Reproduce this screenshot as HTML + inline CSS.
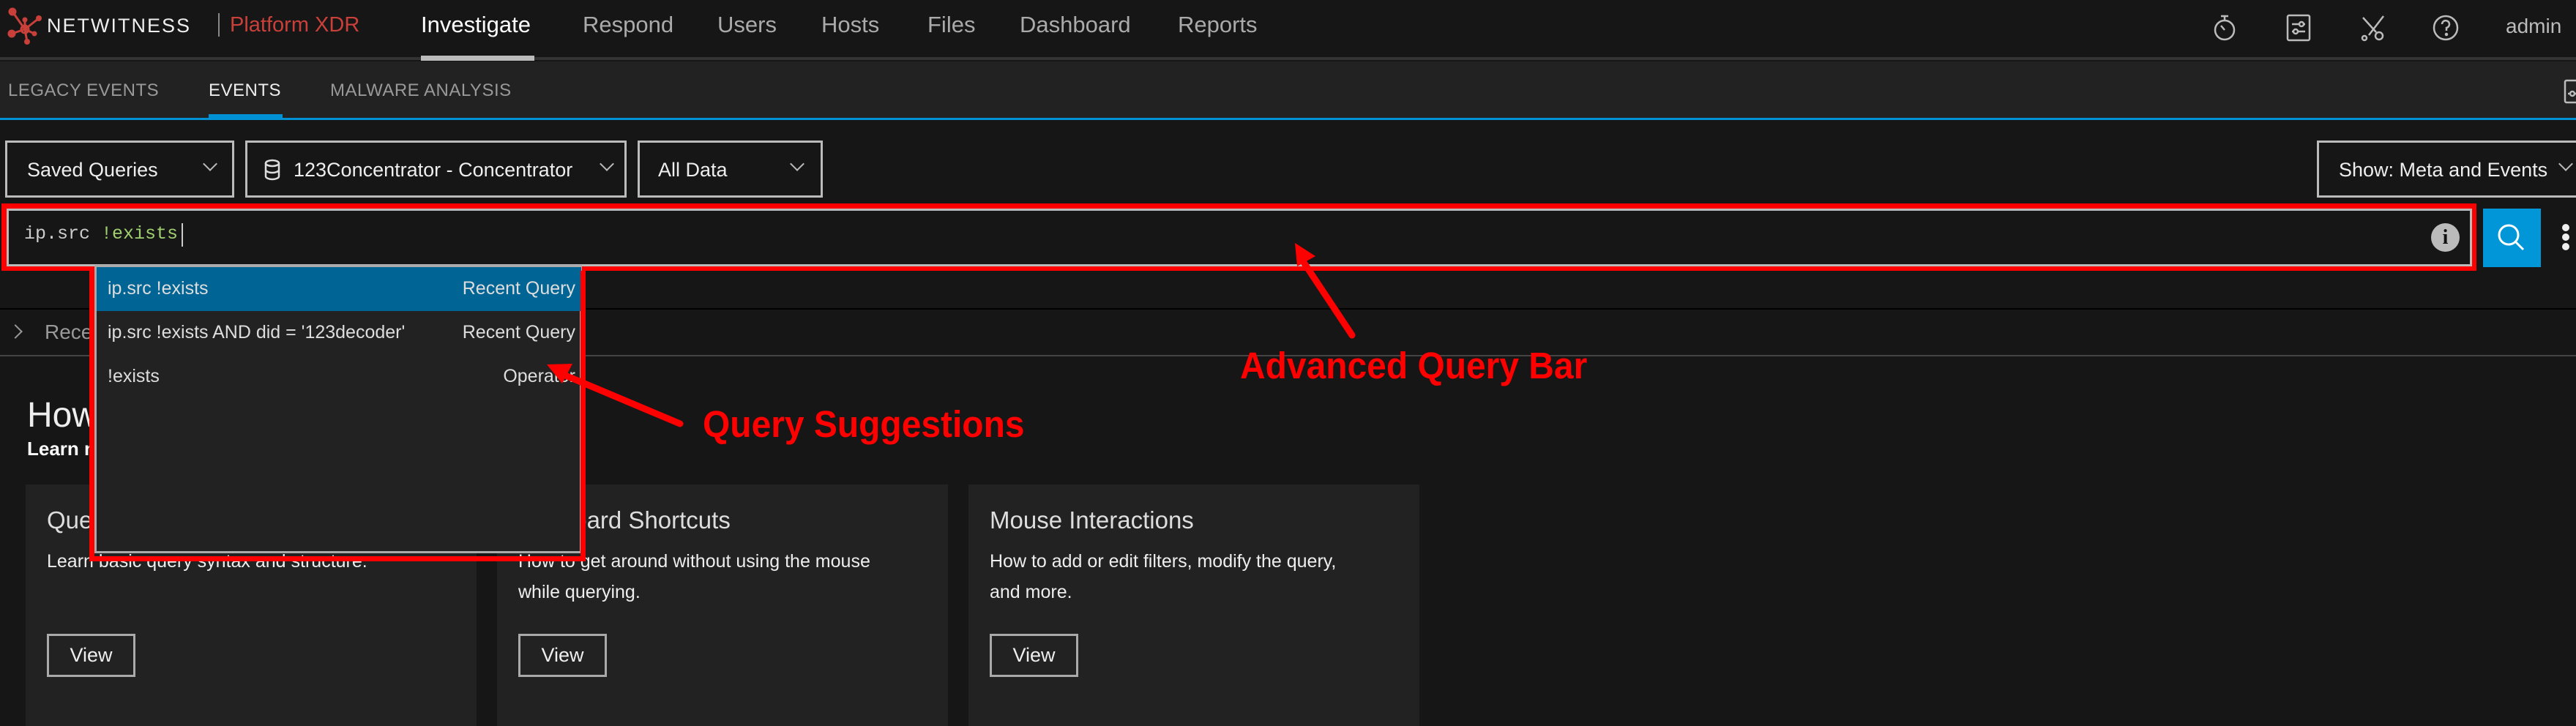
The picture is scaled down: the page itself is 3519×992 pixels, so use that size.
<!DOCTYPE html>
<html><head><meta charset="utf-8"><style>
*{box-sizing:border-box;margin:0;padding:0}
body{width:3519px;height:984px;background:#161616;font-family:"Liberation Sans",sans-serif;color:#ddd;position:relative;overflow:hidden}
.a{position:absolute;white-space:nowrap}
.nav{font-size:31px;color:#aaa;top:16px}
.sub{font-size:24px;color:#999;top:110px;letter-spacing:0.5px}
.dd{position:absolute;top:192px;height:78px;border:3px solid #bbb;font-size:27px;color:#eee}
.dd span{position:absolute;top:22px}
.chev{position:absolute;width:14px;height:14px;border-right:2px solid #bbb;border-bottom:2px solid #bbb;transform:rotate(45deg);top:22px}
.row{position:absolute;left:0;width:662px;height:60px;font-size:25px;color:#ddd}
.row .l{position:absolute;left:15px;top:15px}
.row .r{position:absolute;right:8px;top:15px}
.card{position:absolute;top:662px;width:616px;height:330px;background:#222}
.card h3{position:absolute;left:29px;top:30px;font-size:33px;font-weight:normal;color:#ddd}
.card p{position:absolute;left:29px;top:84px;font-size:25px;line-height:42px;color:#eee;white-space:normal;width:520px}
.card .v{position:absolute;left:29px;top:204px;width:121px;height:59px;border:3px solid #aaa;font-size:27px;color:#eee;text-align:center;line-height:53px}
.ann{position:absolute;color:#f00;font-weight:bold;font-size:51px;font-family:"Liberation Sans",sans-serif;transform:scaleX(0.94);transform-origin:left}
</style></head><body>
<div class="a" style="left:0;top:0;width:3519px;height:82px;background:#161616;border-bottom:4px solid #333"></div>
<svg class="a" style="left:0;top:0" width="60" height="70">
<g stroke="#c9403a" stroke-width="3"><line x1="34" y1="40" x2="17" y2="16"/><line x1="34" y1="40" x2="53" y2="25"/><line x1="34" y1="40" x2="34" y2="27"/><line x1="34" y1="40" x2="16" y2="46"/><line x1="34" y1="40" x2="47" y2="46"/><line x1="34" y1="40" x2="37" y2="57"/><circle cx="34" cy="40" r="5" fill="none"/></g>
<g fill="#c9403a"><circle cx="17" cy="16" r="5.5"/><circle cx="53" cy="25" r="4"/><circle cx="34" cy="27" r="3.5"/><circle cx="16" cy="46" r="5.5"/><circle cx="47" cy="46" r="3.5"/><circle cx="37" cy="57" r="4"/></g></svg>
<div class="a" style="left:64px;top:20px;font-size:27px;color:#eee;letter-spacing:2px">NETWITNESS</div>
<div class="a" style="left:298px;top:18px;width:2px;height:32px;background:#888"></div>
<div class="a" style="left:314px;top:18px;font-size:29px;color:#c9403a">Platform XDR</div>
<div class="a nav" style="left:575px;color:#fff;font-size:31px">Investigate</div>
<div class="a" style="left:575px;top:76px;width:155px;height:7px;background:#bbb"></div>
<div class="a nav" style="left:796px">Respond</div>
<div class="a nav" style="left:980px">Users</div>
<div class="a nav" style="left:1122px">Hosts</div>
<div class="a nav" style="left:1267px">Files</div>
<div class="a nav" style="left:1393px">Dashboard</div>
<div class="a nav" style="left:1609px">Reports</div>
<svg class="a" style="left:3022px;top:18px" width="36" height="40" fill="none" stroke="#bbb" stroke-width="2.5"><circle cx="17" cy="23" r="13"/><line x1="12" y1="4" x2="22" y2="4"/><line x1="17" y1="4" x2="17" y2="10"/><line x1="17" y1="23" x2="12" y2="17"/></svg>
<svg class="a" style="left:3122px;top:18px" width="36" height="40" fill="none" stroke="#bbb" stroke-width="2.5"><rect x="3" y="3" width="30" height="34" rx="2"/><line x1="9" y1="15" x2="27" y2="15"/><line x1="9" y1="25" x2="27" y2="25"/><circle cx="22" cy="15" r="3" fill="#161616"/><circle cx="14" cy="25" r="3" fill="#161616"/></svg>
<svg class="a" style="left:3222px;top:18px" width="40" height="40" fill="none" stroke="#bbb" stroke-width="2.5"><line x1="34" y1="4" x2="14" y2="30"/><circle cx="28" cy="31" r="5"/><line x1="6" y1="6" x2="24" y2="26"/><circle cx="8" cy="34" r="3"/></svg>
<svg class="a" style="left:3322px;top:18px" width="38" height="40" fill="none" stroke="#bbb" stroke-width="2.5"><circle cx="19" cy="20" r="16"/><path d="M14 15a5 5 0 1 1 6 5v4"/><circle cx="20" cy="29" r="1" fill="#bbb"/></svg>
<div class="a" style="left:3423px;top:20px;font-size:28px;color:#bbb">admin</div>
<div class="a" style="left:0;top:84px;width:3519px;height:80px;background:#222;border-bottom:3px solid #0090d4"></div>
<div class="a sub" style="left:11px">LEGACY EVENTS</div>
<div class="a sub" style="left:285px;color:#eee">EVENTS</div>
<div class="a" style="left:285px;top:156px;width:101px;height:8px;background:#0090d4"></div>
<div class="a sub" style="left:451px">MALWARE ANALYSIS</div>
<svg class="a" style="left:3502px;top:108px" width="20" height="34" fill="none" stroke="#bbb" stroke-width="2.5"><rect x="2" y="2" width="30" height="30" rx="2"/><line x1="6" y1="20" x2="20" y2="20"/><circle cx="12" cy="20" r="3" fill="#222"/></svg>
<div class="dd" style="left:7px;width:313px"><span style="left:27px">Saved Queries</span><i class="chev" style="left:270px"></i></div>
<div class="dd" style="left:335px;width:521px"><svg style="position:absolute;left:23px;top:22px" width="22" height="30" fill="none" stroke="#ddd" stroke-width="2.5"><ellipse cx="11" cy="6" rx="9" ry="4"/><path d="M2 6v18c0 2 4 4 9 4s9-2 9-4V6M2 15c0 2 4 4 9 4s9-2 9-4"/></svg><span style="left:63px">123Concentrator - Concentrator</span><i class="chev" style="left:484px"></i></div>
<div class="dd" style="left:871px;width:253px"><span style="left:25px">All Data</span><i class="chev" style="left:208px"></i></div>
<div class="dd" style="left:3165px;width:400px"><span style="left:27px">Show: Meta and Events</span><i class="chev" style="left:330px"></i></div>
<div class="a" style="left:2px;top:278px;width:3381px;height:92px;border:7px solid #f00"></div>
<div class="a" style="left:9px;top:285px;width:3368px;height:79px;border:3px solid #bbb;background:#161616"></div>
<div class="a" style="left:33px;top:305px;font-family:'Liberation Mono',monospace;font-size:25px;color:#ccc">ip.src <span style="color:#9fcf6f">!exists</span></div>
<div class="a" style="left:248px;top:305px;width:2px;height:32px;background:#ccc"></div>
<div class="a" style="left:3321px;top:305px;width:39px;height:39px;border-radius:50%;background:#bbb;color:#111;font-family:'Liberation Serif',serif;font-weight:bold;font-size:28px;text-align:center;line-height:39px">i</div>
<div class="a" style="left:3392px;top:285px;width:79px;height:80px;background:#0096d8"></div>
<svg class="a" style="left:3410px;top:304px" width="44" height="44" fill="none" stroke="#fff" stroke-width="3"><circle cx="17" cy="17" r="13"/><line x1="26" y1="26" x2="37" y2="37"/></svg>
<div class="a" style="left:3500px;top:306px;width:10px;height:10px;border-radius:50%;background:#eee;box-shadow:0 13px 0 #eee,0 26px 0 #eee"></div>
<div class="a" style="left:0;top:421px;width:3519px;height:2px;background:#000"></div>
<div class="a" style="left:0;top:485px;width:3519px;height:2px;background:#444"></div>
<div class="a" style="left:14px;top:446px;width:14px;height:14px;border-right:2px solid #999;border-top:2px solid #999;transform:rotate(45deg)"></div>
<div class="a" style="left:61px;top:438px;font-size:28px;color:#999">Recent Queries</div>
<div class="a" style="left:37px;top:540px;font-size:48px;color:#eee">How to Query</div>
<div class="a" style="left:37px;top:598px;font-size:26px;color:#fff;font-weight:bold">Learn more about querying in the Events view</div>
<div class="card" style="left:35px"><h3>Query Basics</h3><p>Learn basic query syntax and structure.</p><div class="v">View</div></div>
<div class="card" style="left:679px"><h3>Keyboard Shortcuts</h3><p>How to get around without using the mouse while querying.</p><div class="v">View</div></div>
<div class="card" style="left:1323px"><h3>Mouse Interactions</h3><p>How to add or edit filters, modify the query, and more.</p><div class="v">View</div></div>
<div class="a" style="left:122px;top:370px;width:678px;height:397px;border:7px solid #f00"></div>
<div class="a" style="left:129px;top:362px;width:666px;height:394px;border:3px solid #aaa;background:#222">
<div class="row" style="top:0;height:60px;background:#006594"><span class="l">ip.src !exists</span><span class="r">Recent Query</span></div>
<div class="row" style="top:60px"><span class="l">ip.src !exists AND did = '123decoder'</span><span class="r">Recent Query</span></div>
<div class="row" style="top:120px"><span class="l">!exists</span><span class="r">Operator</span></div>
</div>
<div class="a" style="left:122px;top:370px;width:7px;height:397px;background:#f00"></div>
<div class="a" style="left:793px;top:370px;width:7px;height:397px;background:#f00"></div>
<svg class="a" style="left:0;top:0" width="3519" height="984">
<g stroke="#f00" stroke-width="9" stroke-linecap="round"><line x1="1847" y1="458" x2="1782" y2="360"/><line x1="929" y1="579" x2="770" y2="512"/></g>
<polygon points="1769,332 1797,350 1772,364" fill="#f00"/>
<polygon points="747,498 782,497 768,524" fill="#f00"/>
</svg>
<div class="ann" style="left:1694px;top:470px">Advanced Query Bar</div>
<div class="ann" style="left:960px;top:550px">Query Suggestions</div>
</body></html>
